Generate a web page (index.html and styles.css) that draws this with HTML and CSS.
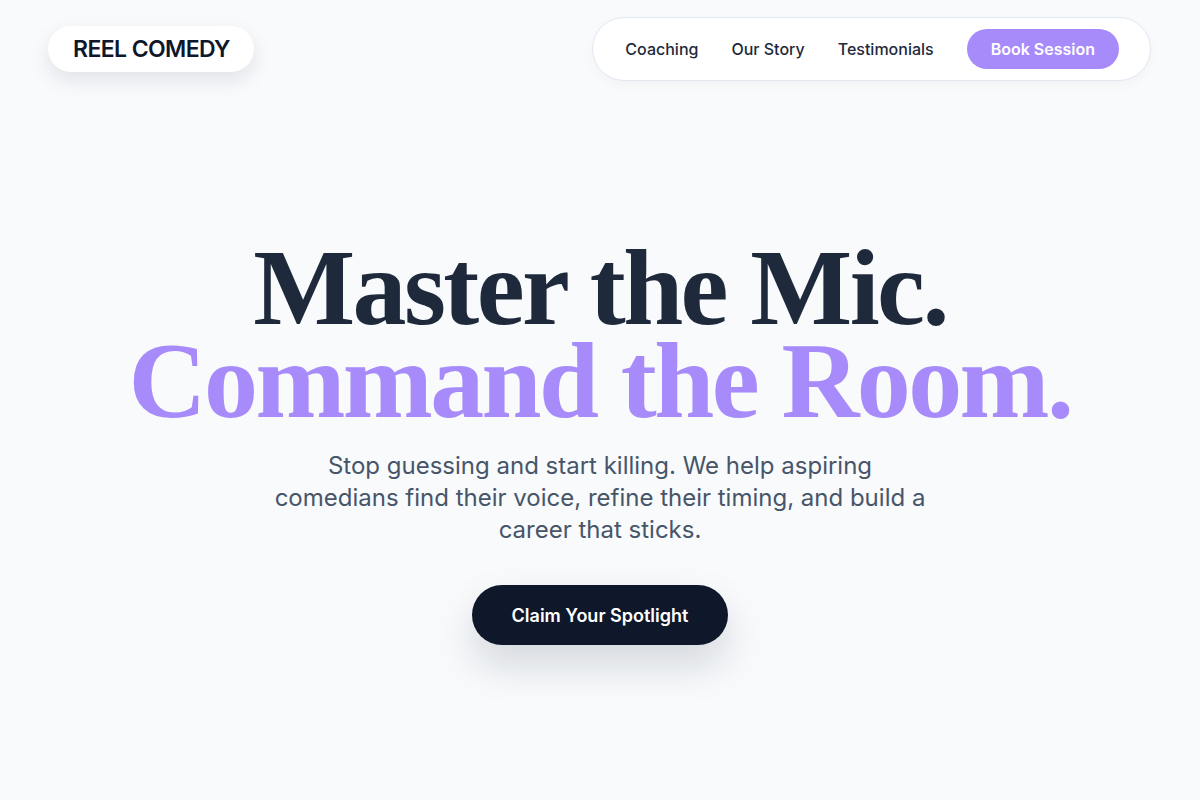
FILE: index.html
```html
<!DOCTYPE html>
<html lang="en">
<head>
<meta charset="utf-8">
<title>Reel Comedy</title>
<link rel="stylesheet" href="styles.css">
</head>
<body>
<header class="topbar">
  <a class="logo" href="#">REEL COMEDY</a>
  <nav class="nav">
    <a class="nav-link" href="#">Coaching</a>
    <a class="nav-link" href="#">Our Story</a>
    <a class="nav-link" href="#">Testimonials</a>
    <a class="nav-cta" href="#">Book Session</a>
  </nav>
</header>
<main class="hero">
  <h1 class="title">
    <span class="line dark">Master the Mic.</span>
    <span class="line accent">Command the Room.</span>
  </h1>
  <p class="lead">Stop guessing and start killing. We help aspiring comedians find their voice, refine their timing, and build a career that sticks.</p>
  <a class="cta" href="#">Claim Your Spotlight</a>
</main>
</body>
</html>
```
FILE: styles.css
```css
* { box-sizing: border-box; }
html, body { margin: 0; padding: 0; }
body {
  background: #f8fafc;
  font-family: Inter, "Noto Sans", sans-serif;
  color: #1e293b;
  width: 1200px;
  height: 800px;
  overflow: hidden;
}
a { text-decoration: none; }
.topbar {
  display: flex;
  justify-content: space-between;
  align-items: flex-start;
  padding: 17px 49px 0 48px;
}
.logo {
  margin-top: 9px;
  height: 46px;
  display: flex;
  align-items: center;
  padding: 0 24px 0 25px;
  background: #fff;
  border-radius: 23px;
  box-shadow: 0 8px 20px rgba(15, 23, 42, 0.10);
  font-weight: 600;
  font-size: 23px;
  letter-spacing: -0.6px;
  color: #0f172a;
}
.nav {
  height: 64px;
  display: flex;
  align-items: center;
  gap: 33px;
  padding: 0 31px 0 32px;
  background: #fff;
  border: 1px solid #e2e8f0;
  border-radius: 32px;
  box-shadow: 0 4px 12px rgba(15, 23, 42, 0.03);
}
.nav-link {
  font-size: 16px;
  font-weight: 550;
  color: #1e293b;
}
.nav-cta {
  height: 40px;
  display: flex;
  align-items: center;
  padding: 0 24px;
  border-radius: 20px;
  background: #a78bfa;
  color: #fff;
  font-size: 16px;
  font-weight: 600;
}
.hero {
  display: flex;
  flex-direction: column;
  align-items: center;
  text-align: center;
  padding-top: 160px;
}
.title {
  margin: 0;
  font-family: "Liberation Serif", "DejaVu Serif", serif;
  font-weight: 700;
  font-size: 108px;
  line-height: 93px;
  letter-spacing: -2.6px;
}
.line { display: block; }
.dark { color: #1e293b; }
.accent { color: #a78bfa; }
.lead {
  margin: 23px 0 0;
  max-width: 662px;
  font-size: 24px;
  line-height: 32px;
  color: #475569;
}
.cta {
  margin-top: 39px;
  height: 60px;
  width: 256px;
  display: flex;
  align-items: center;
  justify-content: center;
  border-radius: 30px;
  background: #0f172a;
  color: #fff;
  font-size: 18px;
  font-weight: 600;
  box-shadow: 0 20px 40px rgba(15, 23, 42, 0.15);
}
```
